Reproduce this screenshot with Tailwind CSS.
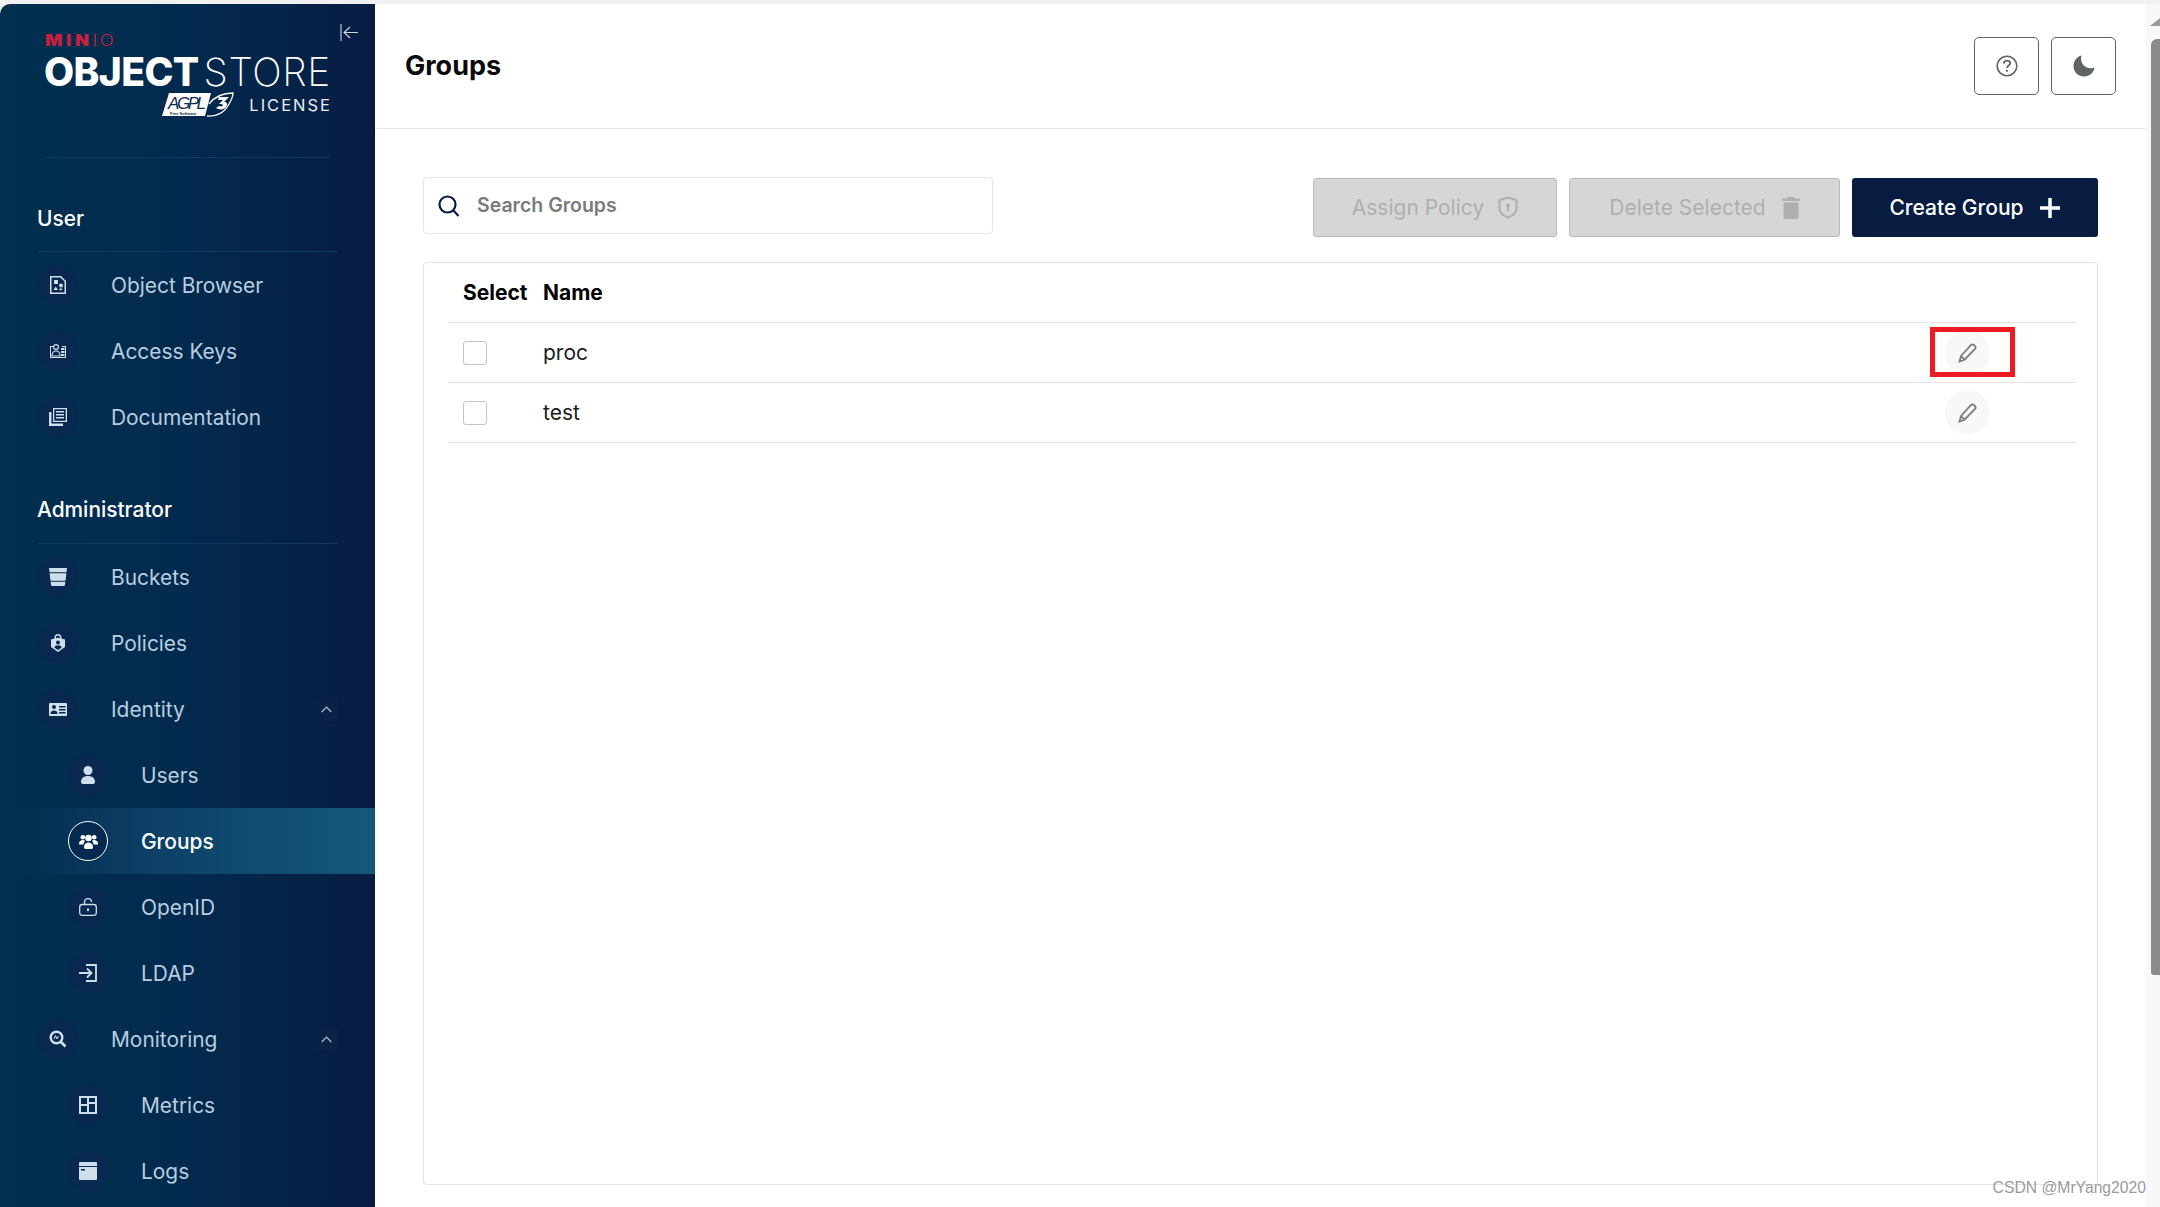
<!DOCTYPE html>
<html lang="en">
  <head>
    <meta charset="UTF-8" />
    <title>Groups - MinIO Object Store</title>
    <script src="https://cdn.jsdelivr.net/npm/@tailwindcss/browser@4"></script>
  </head>
  <body class="h-screen overflow-hidden bg-[#f1f1f1] font-[Inter,sans-serif]">
    <div class="h-[1207px] pt-1 flex">
      <!-- Sidebar -->
      <aside class="w-[375px] shrink-0 overflow-hidden rounded-tl-[10px] bg-linear-to-r from-[#03304f] via-[#022a4e] to-[#081c42] text-[#b9cde0] text-[20.9px]">
        <!-- Logo -->
        <div class="relative h-[154px] mx-[45px] border-b border-[#10395f]">
          <div class="pt-[27px] text-[15.5px] leading-[20px] text-[#c8203f] font-black tracking-[3px] whitespace-nowrap"><span class="inline-block origin-left scale-x-[1.18]">MIN<span class="font-light tracking-[2px]">IO</span></span></div>
          <div class="-ml-px text-[39px] leading-[42px] text-white font-extrabold tracking-[-0.6px] whitespace-nowrap">OBJECT <span class="font-extralight tracking-[0.6px] -ml-[3px]">STORE</span></div>
          <div class="-mt-[1px] flex items-center justify-end gap-[14px]">
            <svg width="74" height="25" viewBox="0 0 74 25">
              <polygon points="1,24 8,1 50,1 44,24" fill="#fff" />
              <text x="7" y="17" font-family="Liberation Sans, sans-serif" font-size="17" font-style="italic" fill="#0a2a4e" textLength="38">AGPL</text>
              <text x="9" y="23" font-family="Liberation Sans, sans-serif" font-size="4" font-weight="700" fill="#0a2a4e">Free Software</text>
              <path d="M46 24C56 25 64 20 68 12C71 7 72 3 72 1C64 1 54 4 48 12" fill="none" stroke="#fff" stroke-width="1.3" />
              <path d="M58 5H68L63 10C66 10 67 12 65 15C63 18 58 18 55 16L58 14C60 15 62 14 62 13C62 12 60 12 58 12L62 8H57Z" fill="#fff" />
            </svg>
            <span class="text-[16.5px] leading-[24px] tracking-[2px] text-[#e8eef4] -mr-[2px]">LICENSE</span>
          </div>
          <svg class="absolute top-[20px] -right-[28px]" width="18" height="18" viewBox="0 0 18 18" fill="none" stroke="#c9d6e2" stroke-width="1.1">
            <path d="M1 0V17M18 8.5H4M10 3L4 8.5L10 14" />
          </svg>
        </div>

        <!-- User -->
        <div class="mx-[38px] h-[94px] pb-[19px] flex items-end border-b border-[#10395f] text-white font-medium leading-[26px]"><span class="-ml-px">User</span></div>
        <a class="h-[66px] pl-[38px] flex items-center">
          <span class="w-10 h-10 rounded-full bg-[#092850] flex items-center justify-center text-[#cfdeeb]">
            <svg width="16" height="18" viewBox="0 0 16 18" fill="currentColor"><path d="M0 0H11L16 5V18H0ZM1.5 1.5V16.5H14.5V5.6L10.4 1.5Z" fill-rule="evenodd" /><rect x="4" y="4" width="4" height="4" /><circle cx="11" cy="9.5" r="2" /><path d="M3.5 14L5.7 10.5L8 14Z" /><rect x="9.5" y="12.5" width="2.5" height="1.7" /></svg>
          </span>
          <span class="ml-[33px] pt-[2px]">Object Browser</span>
        </a>
        <a class="h-[66px] pl-[38px] flex items-center">
          <span class="w-10 h-10 rounded-full bg-[#092850] flex items-center justify-center text-[#cfdeeb]">
            <svg width="18" height="14" viewBox="0 0 18 14" fill="currentColor"><path d="M1 2H5V3H2V13H16V3H13V2H17V14H1Z" /><circle cx="7" cy="3" r="2.4" fill="none" stroke="currentColor" stroke-width="1.2" /><path d="M3 12C3 8 5 7 7 7C9 7 11 8 11 12Z" fill="none" stroke="currentColor" stroke-width="1.2" /><rect x="12" y="4" width="3.5" height="2" /><rect x="12" y="7" width="3.5" height="2" /><rect x="12" y="10" width="3.5" height="2" /></svg>
          </span>
          <span class="ml-[33px] pt-[2px]">Access Keys</span>
        </a>
        <a class="h-[66px] pl-[38px] flex items-center">
          <span class="w-10 h-10 rounded-full bg-[#092850] flex items-center justify-center text-[#cfdeeb]">
            <svg width="18" height="18" viewBox="0 0 18 18" fill="currentColor"><path d="M4 0H18V14H4ZM5.3 1.3V12.7H16.7V1.3Z" fill-rule="evenodd" /><rect x="7" y="3" width="8" height="1.5" /><rect x="7" y="6" width="8" height="1.5" /><rect x="7" y="9" width="8" height="1.5" /><path d="M0 4H2.5V15.5H14V18H0Z" /></svg>
          </span>
          <span class="ml-[33px] pt-[2px]">Documentation</span>
        </a>

        <!-- Administrator -->
        <div class="mx-[38px] h-[94px] pb-[20px] flex items-end border-b border-[#10395f] text-white font-medium leading-[26px]"><span class="-ml-px">Administrator</span></div>
        <a class="h-[66px] pl-[38px] flex items-center">
          <span class="w-10 h-10 rounded-full bg-[#092850] flex items-center justify-center text-[#cfdeeb]">
            <svg width="18" height="18" viewBox="0 0 18 18" fill="currentColor"><path d="M0 0H18L17.5 4.300H.5ZM.6 5.300H17.400L16.500 12.700H1.500ZM1.600 13.700H16.400L16 16.500Q15.800 18 14.500 18H3.500Q2.200 18 2 16.500Z" /></svg>
          </span>
          <span class="ml-[33px] pt-[2px]">Buckets</span>
        </a>
        <a class="h-[66px] pl-[38px] flex items-center">
          <span class="w-10 h-10 rounded-full bg-[#092850] flex items-center justify-center text-[#cfdeeb]">
            <svg width="14" height="18" viewBox="0 0 14 18" fill="currentColor"><path fill-rule="evenodd" d="M3.5 4.5V3.5C3.5 1.5 5 0 7 0C9 0 10.500 1.500 10.500 3.500V4.500L14 5.500V13L7 18L0 13V5.500ZM5 4.300L7 3.800L9 4.300V3.500C9 2.400 8.100 1.500 7 1.500C5.900 1.500 5 2.400 5 3.500ZM7 6.500A2 2 0 1 0 7 10.500A2 2 0 1 0 7 6.500ZM3.500 13.800L7 16L10.500 13.800C10.500 12 9 11.300 7 11.300C5 11.300 3.500 12 3.500 13.800Z" /></svg>
          </span>
          <span class="ml-[33px] pt-[2px]">Policies</span>
        </a>
        <a class="h-[66px] pl-[38px] pr-[37px] flex items-center">
          <span class="w-10 h-10 rounded-full bg-[#092850] flex items-center justify-center text-[#cfdeeb]">
            <svg width="18" height="13" viewBox="0 0 18 13" fill="currentColor"><path fill-rule="evenodd" d="M1 0H17Q18 0 18 1V12Q18 13 17 13H1Q0 13 0 12V1Q0 0 1 0ZM5 2A2 2 0 1 0 5 6A2 2 0 1 0 5 2ZM1.500 11H8.500C8.500 8.500 7 7.500 5 7.500C3 7.500 1.500 8.500 1.500 11ZM10 3V4.500H16.500V3ZM10 6V7.500H16.500V6ZM10 9V10.500H16.500V9Z" /></svg>
          </span>
          <span class="ml-[33px] pt-[2px]">Identity</span>
          <span class="ml-auto w-[23px] h-[23px] rounded-[2px] bg-[#0a2148] flex items-center justify-center">
            <svg width="11" height="7" viewBox="0 0 11 7" fill="none" stroke="#aebfd1" stroke-width="1.2"><path d="M.7 6L5.500 1L10.300 6" /></svg>
          </span>
        </a>
        <a class="h-[66px] pl-[68px] flex items-center">
          <span class="w-10 h-10 rounded-full bg-[#092850] flex items-center justify-center text-[#cfdeeb]">
            <svg width="14" height="18" viewBox="0 0 14 18" fill="currentColor"><circle cx="7" cy="4.500" r="4.500" /><path d="M0 16C0 12 3 10 7 10C11 10 14 12 14 16Q14 18 12 18H2Q0 18 0 16Z" /></svg>
          </span>
          <span class="ml-[33px] pt-[2px]">Users</span>
        </a>
        <!-- Selected row -->
        <a class="h-[66px] pl-[68px] flex items-center bg-linear-to-r from-transparent from-[5%] via-[#0d3f66] via-[40%] to-[#14587c] text-white font-medium">
          <span class="w-10 h-10 rounded-full bg-[#05294f] border border-white flex items-center justify-center">
            <svg width="19" height="15" viewBox="0 0 19 15" fill="#fff"><circle cx="9.500" cy="4" r="3.300" /><circle cx="3.800" cy="3.300" r="2.300" /><circle cx="15.200" cy="3.300" r="2.300" /><path d="M0 10C0 7 2 6 4 6C5 6 5.600 6.300 6 6.800C5 8 4.500 9 4.500 10.500H.5Q0 10.500 0 10ZM19 10C19 7 17 6 15 6C14 6 13.400 6.300 13 6.800C14 8 14.500 9 14.500 10.500H18.500Q19 10.500 19 10Z" /><path d="M5 13C5 10 7 8.500 9.500 8.500C12 8.500 14 10 14 13Q14 15 12.500 15H6.500Q5 15 5 13Z" /></svg>
          </span>
          <span class="ml-[33px] pt-[2px]">Groups</span>
        </a>
        <a class="h-[66px] pl-[68px] flex items-center">
          <span class="w-10 h-10 rounded-full bg-[#092850] flex items-center justify-center text-[#cfdeeb]">
            <svg width="18" height="18" viewBox="0 0 18 18" fill="none" stroke="currentColor" stroke-width="1.300"><rect x=".7" y="6.500" width="16.600" height="10.800" rx="2.500" /><path d="M5.500 6.500V4C5.500 2 7 .7 9 .7C11 .7 12.500 2 12.500 4" /><path d="M9 10.500V13" stroke-width="2" /></svg>
          </span>
          <span class="ml-[33px] pt-[2px]">OpenID</span>
        </a>
        <a class="h-[66px] pl-[68px] flex items-center">
          <span class="w-10 h-10 rounded-full bg-[#092850] flex items-center justify-center text-[#cfdeeb]">
            <svg width="18" height="18" viewBox="0 0 18 18" fill="none" stroke="currentColor" stroke-width="1.800"><path d="M7 1H17V17H7" /><path d="M0 9H12M8 4.500L12.500 9L8 13.500" /></svg>
          </span>
          <span class="ml-[33px] pt-[2px]">LDAP</span>
        </a>
        <a class="h-[66px] pl-[38px] pr-[37px] flex items-center">
          <span class="w-10 h-10 rounded-full bg-[#092850] flex items-center justify-center text-[#cfdeeb]">
            <svg width="18" height="18" viewBox="0 0 18 18" fill="none" stroke="currentColor"><circle cx="7.500" cy="7.500" r="5.800" stroke-width="2.400" /><path d="M11.500 11.500L16.500 16.500" stroke-width="2.600" /><path d="M5 9L6.500 5.500L8 9L9.500 6" stroke-width="1" /></svg>
          </span>
          <span class="ml-[33px] pt-[2px]">Monitoring</span>
          <span class="ml-auto w-[23px] h-[23px] rounded-[2px] bg-[#0a2148] flex items-center justify-center">
            <svg width="11" height="7" viewBox="0 0 11 7" fill="none" stroke="#aebfd1" stroke-width="1.200"><path d="M.7 6L5.500 1L10.300 6" /></svg>
          </span>
        </a>
        <a class="h-[66px] pl-[68px] flex items-center">
          <span class="w-10 h-10 rounded-full bg-[#092850] flex items-center justify-center text-[#cfdeeb]">
            <svg width="18" height="18" viewBox="0 0 18 18" fill="currentColor"><path fill-rule="evenodd" d="M0 0H18V18H0ZM2 2V8H8V2ZM10 2V6H16V2ZM10 8V16H16V8ZM2 10V16H8V10Z" /></svg>
          </span>
          <span class="ml-[33px] pt-[2px]">Metrics</span>
        </a>
        <a class="h-[66px] pl-[68px] flex items-center">
          <span class="w-10 h-10 rounded-full bg-[#092850] flex items-center justify-center text-[#cfdeeb]">
            <svg width="18" height="18" viewBox="0 0 18 18" fill="currentColor"><path d="M1 0H17Q18 0 18 1V4H0V1Q0 0 1 0Z" /><path fill-rule="evenodd" d="M0 5H18V17Q18 18 17 18H1Q0 18 0 17ZM2 7V8.500H6V7Z" /></svg>
          </span>
          <span class="ml-[33px] pt-[2px]">Logs</span>
        </a>
      </aside>

      <!-- Main -->
      <main class="flex-1 min-w-0 bg-white flex flex-col">
        <header class="h-[125px] shrink-0 pl-[30px] pr-[30px] flex items-center justify-between border-b border-[#e6e6e6]">
          <h1 class="text-[27px] font-bold text-[#0b0b0b]">Groups</h1>
          <div class="flex gap-3">
            <button class="w-[65px] h-[58px] rounded-[5px] border border-[#5f6464] flex items-center justify-center">
              <svg width="22" height="22" viewBox="0 0 22 22" fill="none" stroke="#5f6464" stroke-width="1.600"><circle cx="11" cy="11" r="9.800" /><path d="M7.800 8.500C7.800 6.500 9.300 5.700 11 5.700C12.800 5.700 14.200 6.700 14.200 8.300C14.200 10.500 11 10.500 11 13" stroke-width="1.800" /><circle cx="11" cy="15.800" r="1.100" fill="#5f6464" stroke="none" /></svg>
            </button>
            <button class="w-[65px] h-[58px] rounded-[5px] border border-[#5f6464] flex items-center justify-center">
              <svg width="22" height="22" viewBox="0 0 22 22" fill="#5f6464"><path d="M8.500 .5C7 5 9 10.500 14 12.500C16.500 13.500 19.500 13.500 21.500 12.500C21 17.500 16.500 21.500 11 21.500C5 21.500 .5 17 .5 11C.5 6 4 1.500 8.500 .5Z" /></svg>
            </button>
          </div>
        </header>

        <div class="flex-1 min-h-0 pt-[48px] px-[48px] pb-[22px] flex flex-col">
          <!-- Toolbar -->
          <div class="flex justify-between items-start">
            <label class="w-[570px] h-[57px] pl-[14px] rounded-[4px] border border-[#e6e6e6] flex items-center gap-[17px]">
              <svg width="22" height="22" viewBox="0 0 22 22" fill="none" stroke="#081c42" stroke-width="2.200"><circle cx="9.500" cy="9.500" r="8" /><path d="M15 15L20.500 21" /></svg>
              <span class="text-[19.5px] font-semibold text-[#7a7a7a]">Search Groups</span>
            </label>
            <div class="flex gap-3 mt-px">
              <button class="w-[244px] h-[59px] rounded-[3px] bg-[#d5d7d7] border border-[#b8baba] flex items-center justify-center gap-[14px] text-[21px] text-[#aeb0b0]">
                Assign Policy
                <svg width="20" height="23" viewBox="0 0 20 23" fill="none" stroke="#aeb0b0" stroke-width="2"><path d="M10 1.500L18.500 4V12C18.500 17 14 20 10 21.500C6 20 1.500 17 1.500 12V4Z" /><circle cx="10" cy="9.500" r="2" fill="#aeb0b0" stroke="none" /><path d="M10 10V15" stroke-width="2" /></svg>
              </button>
              <button class="w-[271px] h-[59px] rounded-[3px] bg-[#d5d7d7] border border-[#b8baba] flex items-center justify-center gap-[16px] text-[21px] text-[#aeb0b0]">
                Delete Selected
                <svg width="18" height="22" viewBox="0 0 18 22" fill="#aeb0b0"><path d="M6 0H12L13 1.500H18V4H0V1.500H5ZM1.500 5.500H16.500V20Q16.500 22 14.500 22H3.500Q1.500 22 1.500 20Z" /></svg>
              </button>
              <button class="w-[246px] h-[59px] rounded-[3px] bg-[#081c42] flex items-center justify-center gap-[15px] text-[21px] font-medium text-white">
                Create Group
                <svg width="22" height="22" viewBox="0 0 22 22" fill="none" stroke="#fff" stroke-width="3.500"><path d="M11 1V21M1 11H21" /></svg>
              </button>
            </div>
          </div>

          <!-- Table card -->
          <div class="mt-[25px] flex-1 min-h-0 rounded-[4px] border border-[#e4e4e4] pl-[24px] pr-[21px] text-[21px] text-[#1c1c1c]">
            <div class="h-[60px] pl-[15px] flex items-center border-b border-[#e4e4e4] font-bold text-black">
              <span class="w-[80px]">Select</span>
              <span>Name</span>
            </div>
            <div class="h-[60px] pl-[15px] flex items-center border-b border-[#e4e4e4]">
              <span class="w-[80px]"><span class="block w-6 h-6 rounded-[3px] border border-[#c4c4c4]"></span></span>
              <span>proc</span>
              <span class="relative ml-auto mr-[86px]">
                <span class="w-[45px] h-[45px] rounded-full bg-[#f8f8f8] flex items-center justify-center">
                  <svg width="19" height="20" viewBox="0 0 19 20" fill="none" stroke="#7d7d7d" stroke-width="1.800"><path d="M3 13L13 2Q14.500 .7 16 2L17 3Q18.300 4.500 17 6L6.500 16.700L1.500 18.500ZM3 13L6.500 16.700" /></svg>
                </span>
                <!-- annotation drawn over the button -->
                <span class="absolute -left-[15px] -top-[3px] w-[85px] h-[50px] border-[5px] border-[#ed1c24]"></span>
              </span>
            </div>
            <div class="h-[60px] pl-[15px] flex items-center border-b border-[#e4e4e4]">
              <span class="w-[80px]"><span class="block w-6 h-6 rounded-[3px] border border-[#c4c4c4]"></span></span>
              <span>test</span>
              <span class="ml-auto mr-[86px] w-[45px] h-[45px] rounded-full bg-[#f8f8f8] flex items-center justify-center">
                <svg width="19" height="20" viewBox="0 0 19 20" fill="none" stroke="#7d7d7d" stroke-width="1.800"><path d="M3 13L13 2Q14.500 .7 16 2L17 3Q18.300 4.500 17 6L6.500 16.700L1.500 18.500ZM3 13L6.500 16.700" /></svg>
              </span>
            </div>
          </div>
        </div>
      </main>

      <!-- Scrollbar -->
      <div class="relative w-[14px] shrink-0 bg-[#f8f8f8] flex flex-col items-end">
        <svg class="mt-[14px]" width="10" height="8" viewBox="0 0 10 8" fill="#9a9a9a"><path d="M10 0V8H0Z" /></svg>
        <div class="mt-[13px] w-[9px] h-[936px] rounded-tl-[6px] rounded-bl-[3px] bg-[#8b8b8b]"></div>
      </div>
    </div>

    <!-- Watermark -->
    <div class="absolute right-[14px] bottom-[8px] text-[15.7px] leading-[22px] text-[#9a9a9a] font-['Liberation_Sans',sans-serif]">CSDN @MrYang2020</div>
  </body>
</html>
